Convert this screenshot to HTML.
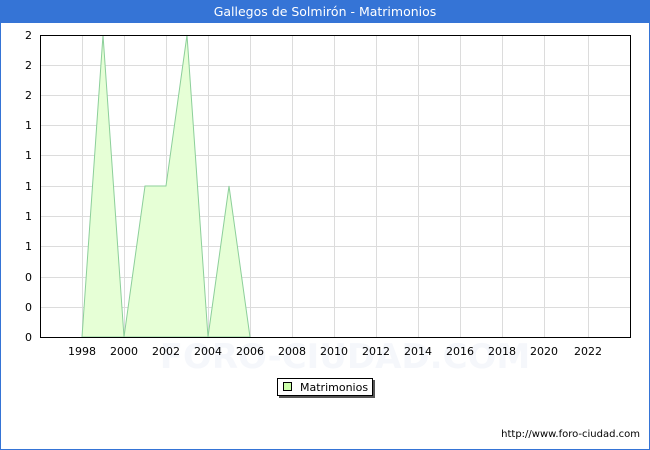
<!DOCTYPE html>
<html><head><style>
body{margin:0;width:650px;height:450px;overflow:hidden;background:#fff;font-family:"DejaVu Sans","Liberation Sans",sans-serif;}
</style></head><body>
<svg width="650" height="450" xmlns="http://www.w3.org/2000/svg" style="display:block">
<rect x="0.5" y="0.5" width="649" height="449" fill="#fff" stroke="#3574d6"/>
<rect x="0" y="0" width="650" height="23" fill="#3574d6"/>
<text x="325" y="16" fill="#fff" font-size="12.5" text-anchor="middle" font-family="DejaVu Sans,sans-serif">Gallegos de Solmirón - Matrimonios</text>
<g stroke="#dcdcdc" stroke-width="1">
<line x1="40" y1="65.5" x2="630" y2="65.5"/><line x1="40" y1="95.5" x2="630" y2="95.5"/><line x1="40" y1="125.5" x2="630" y2="125.5"/><line x1="40" y1="155.5" x2="630" y2="155.5"/><line x1="40" y1="186.5" x2="630" y2="186.5"/><line x1="40" y1="216.5" x2="630" y2="216.5"/><line x1="40" y1="246.5" x2="630" y2="246.5"/><line x1="40" y1="277.5" x2="630" y2="277.5"/><line x1="40" y1="307.5" x2="630" y2="307.5"/>
<line x1="82.5" y1="35" x2="82.5" y2="337"/><line x1="124.5" y1="35" x2="124.5" y2="337"/><line x1="166.5" y1="35" x2="166.5" y2="337"/><line x1="208.5" y1="35" x2="208.5" y2="337"/><line x1="250.5" y1="35" x2="250.5" y2="337"/><line x1="292.5" y1="35" x2="292.5" y2="337"/><line x1="334.5" y1="35" x2="334.5" y2="337"/><line x1="376.5" y1="35" x2="376.5" y2="337"/><line x1="418.5" y1="35" x2="418.5" y2="337"/><line x1="460.5" y1="35" x2="460.5" y2="337"/><line x1="502.5" y1="35" x2="502.5" y2="337"/><line x1="544.5" y1="35" x2="544.5" y2="337"/><line x1="588.5" y1="35" x2="588.5" y2="337"/>
</g>
<text x="345" y="368" font-size="34" fill="#f5f7fb" text-anchor="middle" font-weight="bold">FORO-CIUDAD.COM</text>
<polygon points="82,337 103,35 124,337 145,186 166,186 187,35 208,337 229,186 250,337" fill="#e6ffd6" stroke="#8ccf9a" stroke-width="1"/>
<rect x="40.5" y="35.5" width="590" height="302" fill="none" stroke="#000"/>
<g font-size="11" fill="#000" text-anchor="end">
<text x="32" y="39">2</text><text x="32" y="69">2</text><text x="32" y="99">2</text><text x="32" y="129">1</text><text x="32" y="159">1</text><text x="32" y="190">1</text><text x="32" y="220">1</text><text x="32" y="250">1</text><text x="32" y="281">0</text><text x="32" y="311">0</text><text x="32" y="341">0</text>
</g>
<g font-size="11" fill="#000" text-anchor="middle">
<text x="82" y="355">1998</text><text x="124" y="355">2000</text><text x="166" y="355">2002</text><text x="208" y="355">2004</text><text x="250" y="355">2006</text><text x="292" y="355">2008</text><text x="334" y="355">2010</text><text x="376" y="355">2012</text><text x="418" y="355">2014</text><text x="460" y="355">2016</text><text x="502" y="355">2018</text><text x="544" y="355">2020</text><text x="588" y="355">2022</text>
</g>
<rect x="279" y="380" width="96" height="18" fill="#555"/>
<rect x="277.5" y="378.5" width="95" height="17" fill="#fff" stroke="#000"/>
<rect x="283.5" y="382.5" width="8" height="8" fill="#ccffaa" stroke="#000"/>
<text x="300" y="391" font-size="11">Matrimonios</text>
<text x="640" y="437" font-size="10" text-anchor="end">http://www.foro-ciudad.com</text>
</svg>
</body></html>
